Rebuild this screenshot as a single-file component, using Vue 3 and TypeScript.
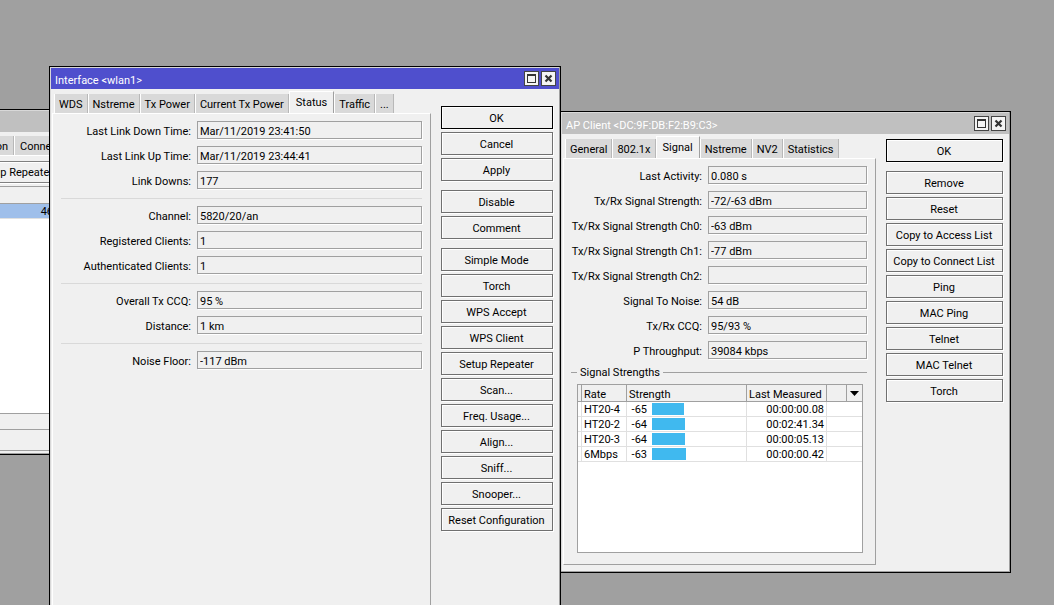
<script setup lang="ts">
import { ref } from 'vue'

interface Field {
  id: string
  label: string
  value: string
}

interface RateRow {
  rate: string
  strength: number
  measured: string
}

const backTabs = ['Registration', 'Connect List']
const interfaceTabs = ['WDS', 'Nstreme', 'Tx Power', 'Current Tx Power', 'Status', 'Traffic', '...']
const clientTabs = ['General', '802.1x', 'Signal', 'Nstreme', 'NV2', 'Statistics']

const interfaceTab = ref('Status')
const clientTab = ref('Signal')

const interfaceFields: Field[][] = [
  [
    { id: 'last-down', label: 'Last Link Down Time:', value: 'Mar/11/2019 23:41:50' },
    { id: 'last-up', label: 'Last Link Up Time:', value: 'Mar/11/2019 23:44:41' },
    { id: 'link-downs', label: 'Link Downs:', value: '177' },
  ],
  [
    { id: 'channel', label: 'Channel:', value: '5820/20/an' },
    { id: 'registered', label: 'Registered Clients:', value: '1' },
    { id: 'authenticated', label: 'Authenticated Clients:', value: '1' },
  ],
  [
    { id: 'overall-ccq', label: 'Overall Tx CCQ:', value: '95 %' },
    { id: 'distance', label: 'Distance:', value: '1 km' },
  ],
  [{ id: 'noise-floor', label: 'Noise Floor:', value: '-117 dBm' }],
]

const clientFields: Field[] = [
  { id: 'last-activity', label: 'Last Activity:', value: '0.080 s' },
  { id: 'signal', label: 'Tx/Rx Signal Strength:', value: '-72/-63 dBm' },
  { id: 'signal-ch0', label: 'Tx/Rx Signal Strength Ch0:', value: '-63 dBm' },
  { id: 'signal-ch1', label: 'Tx/Rx Signal Strength Ch1:', value: '-77 dBm' },
  { id: 'signal-ch2', label: 'Tx/Rx Signal Strength Ch2:', value: '' },
  { id: 'snr', label: 'Signal To Noise:', value: '54 dB' },
  { id: 'ccq', label: 'Tx/Rx CCQ:', value: '95/93 %' },
  { id: 'throughput', label: 'P Throughput:', value: '39084 kbps' },
]

const interfaceButtons: string[][] = [
  ['OK', 'Cancel', 'Apply'],
  ['Disable', 'Comment'],
  [
    'Simple Mode', 'Torch', 'WPS Accept', 'WPS Client', 'Setup Repeater', 'Scan...',
    'Freq. Usage...', 'Align...', 'Sniff...', 'Snooper...', 'Reset Configuration',
  ],
]

const clientButtons: string[][] = [
  ['OK'],
  [
    'Remove', 'Reset', 'Copy to Access List', 'Copy to Connect List', 'Ping',
    'MAC Ping', 'Telnet', 'MAC Telnet', 'Torch',
  ],
]

const rates: RateRow[] = [
  { rate: 'HT20-4', strength: -65, measured: '00:00:00.08' },
  { rate: 'HT20-2', strength: -64, measured: '00:02:41.34' },
  { rate: 'HT20-3', strength: -64, measured: '00:00:05.13' },
  { rate: '6Mbps', strength: -63, measured: '00:00:00.42' },
]

const barWidth = (strength: number): string => `${97 + strength}px`
</script>

<template>
  <main class="desktop">
    <section class="window window-back" aria-label="Wireless Tables">
      <header class="titlebar"></header>
      <div class="back-body">
        <div class="tabs back-tabs" role="tablist">
          <button v-for="tab in backTabs" :key="tab" type="button" role="tab" class="tab">{{ tab }}</button>
        </div>
        <div class="toolbar">
          <button type="button" class="tool">Setup Repeater</button>
        </div>
        <div class="list">
          <div class="list-head"></div>
          <div class="list-row">46</div>
        </div>
        <div class="back-status"></div>
        <div class="back-footer"></div>
      </div>
    </section>

    <section class="window window-client" aria-label="AP Client">
      <header class="titlebar">
        <h2 class="title">AP Client &lt;DC:9F:DB:F2:B9:C3&gt;</h2>
        <button type="button" class="title-button" aria-label="Maximize">
          <svg viewBox="0 0 13 13"><path d="M2 2h9v9H2zM3 4v6h7V4z" fill="#333" fill-rule="evenodd" /></svg>
        </button>
        <button type="button" class="title-button" aria-label="Close">
          <svg viewBox="0 0 13 13"><path d="M3.5 3.5l6 6M9.5 3.5l-6 6" stroke="#333" stroke-width="2.2" /></svg>
        </button>
      </header>
      <div class="window-body">
        <div class="sheet">
          <div class="tabs" role="tablist">
            <button
              v-for="tab in clientTabs" :key="tab" type="button" role="tab" class="tab"
              :class="{ active: tab === clientTab }" :aria-selected="tab === clientTab" @click="clientTab = tab"
            >{{ tab }}</button>
          </div>
          <div class="panel panel-client">
            <div class="fields">
              <div v-for="field in clientFields" :key="field.id" class="field">
                <label :for="field.id">{{ field.label }}</label>
                <input :id="field.id" type="text" readonly :value="field.value" />
              </div>
            </div>
            <fieldset class="strengths">
              <legend>Signal Strengths</legend>
              <div class="table-box">
                <table>
                  <colgroup>
                    <col class="col-mark" /><col class="col-rate" /><col class="col-strength" />
                    <col class="col-measured" /><col class="col-spare" /><col />
                  </colgroup>
                  <thead>
                    <tr>
                      <th></th>
                      <th scope="col">Rate</th>
                      <th scope="col">Strength</th>
                      <th scope="col">Last Measured</th>
                      <th></th>
                      <th class="menu-cell">
                        <button type="button" class="column-menu" aria-label="Columns">
                          <svg viewBox="0 0 9 5"><path d="M0 0h9L4.5 5z" fill="#000" /></svg>
                        </button>
                      </th>
                    </tr>
                  </thead>
                  <tbody>
                    <tr v-for="row in rates" :key="row.rate">
                      <td></td>
                      <td>{{ row.rate }}</td>
                      <td>
                        <div class="strength">
                          <span class="strength-value">{{ row.strength }}</span>
                          <span class="bar" :style="{ width: barWidth(row.strength) }"></span>
                        </div>
                      </td>
                      <td class="measured">{{ row.measured }}</td>
                      <td></td>
                      <td></td>
                    </tr>
                  </tbody>
                </table>
              </div>
            </fieldset>
          </div>
        </div>
        <div class="actions actions-client">
          <div v-for="(group, g) in clientButtons" :key="g" class="action-group">
            <button
              v-for="name in group" :key="name" type="button" class="action" :class="{ primary: name === 'OK' }"
            >{{ name }}</button>
          </div>
        </div>
      </div>
    </section>

    <section class="window window-interface" aria-label="Interface">
      <header class="titlebar focused">
        <h2 class="title">Interface &lt;wlan1&gt;</h2>
        <button type="button" class="title-button" aria-label="Maximize">
          <svg viewBox="0 0 13 13"><path d="M2 2h9v9H2zM3 4v6h7V4z" fill="#333" fill-rule="evenodd" /></svg>
        </button>
        <button type="button" class="title-button" aria-label="Close">
          <svg viewBox="0 0 13 13"><path d="M3.5 3.5l6 6M9.5 3.5l-6 6" stroke="#333" stroke-width="2.2" /></svg>
        </button>
      </header>
      <div class="window-body">
        <div class="sheet">
          <div class="tabs" role="tablist">
            <button
              v-for="tab in interfaceTabs" :key="tab" type="button" role="tab" class="tab"
              :class="{ active: tab === interfaceTab }" :aria-selected="tab === interfaceTab"
              @click="interfaceTab = tab"
            >{{ tab }}</button>
          </div>
          <div class="panel panel-interface">
            <div v-for="(group, g) in interfaceFields" :key="g" class="fields">
              <div v-for="field in group" :key="field.id" class="field">
                <label :for="field.id">{{ field.label }}</label>
                <input :id="field.id" type="text" readonly :value="field.value" />
              </div>
            </div>
          </div>
        </div>
        <div class="actions actions-interface">
          <div v-for="(group, g) in interfaceButtons" :key="g" class="action-group">
            <button
              v-for="name in group" :key="name" type="button" class="action" :class="{ primary: name === 'OK' }"
            >{{ name }}</button>
          </div>
        </div>
      </div>
    </section>
  </main>
</template>

<style>
body {
  margin: 0;
}
</style>

<style scoped>
.desktop {
  position: relative;
  min-height: 100vh;
  overflow: hidden;
  background: #a0a0a0;
  color: #000;
  font: 11px/15px Roboto, "Liberation Sans", sans-serif;
}

.desktop * {
  box-sizing: border-box;
}

button,
input {
  margin: 0;
  padding: 0;
  border: 0;
  border-radius: 0;
  background: none;
  color: inherit;
  font: inherit;
}

/* Windows are placed freely on the desktop */
.window {
  position: absolute;
  display: flex;
  flex-direction: column;
  padding: 1px;
  border: 1px solid #000;
  background: #f0f0f0;
  box-shadow: inset -1px -1px 0 #a0a0a0, inset 1px 1px 0 #d8d8d8;
}

.window-back {
  top: 109px;
  left: -300px;
  width: 400px;
  height: 346px;
}

.window-client {
  top: 111px;
  left: 560px;
  width: 451px;
  height: 462px;
}

.window-interface {
  top: 66px;
  bottom: -12px;
  left: 49px;
  width: 512px;
}

.titlebar {
  display: flex;
  flex: none;
  align-items: center;
  gap: 2px;
  height: 21px;
  padding: 0 3px 0 4px;
  background: #c0c0c0;
  color: #fff;
}

.titlebar.focused {
  background: #4f4fcd;
}

.title {
  flex: 1;
  margin: 0;
  padding-top: 3px;
  font: inherit;
}

.title-button {
  display: flex;
  width: 15px;
  height: 15px;
  border: 1px solid #444;
  background: #f4f4f4;
}

.title-button svg {
  width: 13px;
  height: 13px;
}

.window-body {
  display: flex;
  flex: 1;
  gap: 10px;
  min-height: 0;
}

.sheet {
  display: flex;
  flex: 1;
  flex-direction: column;
  min-width: 0;
  padding: 2px 0 6px 1px;
}

.tabs {
  display: flex;
  flex: none;
  align-items: flex-end;
  height: 22px;
  padding-left: 2px;
}

.tab {
  height: 19px;
  padding: 2px 4px 0;
  border-right: 1px solid #b8b8b8;
  border-left: 1px solid #fff;
  background: #d9d9d9;
  white-space: nowrap;
}

.tab.active {
  height: 22px;
  padding: 0 6px 1px;
  border-top: 1px solid #fff;
  border-right-color: #a0a0a0;
  background: #f0f0f0;
}

.panel {
  flex: 1;
  border-top: 1px solid #fff;
  border-right: 1px solid #a0a0a0;
  border-left: 1px solid #fff;
}

.panel-interface {
  padding: 7px 8px 0;
}

.panel-client {
  padding: 7px 8px 0 7px;
  border-bottom: 1px solid #a0a0a0;
}

.fields {
  display: flex;
  flex-direction: column;
  gap: 7px;
}

.fields + .fields {
  margin-top: 9px;
  padding-top: 7px;
  border-top: 1px solid #d9d9d9;
}

.field {
  display: flex;
  align-items: center;
  gap: 6px;
}

.field label {
  width: 130px;
  padding-top: 3px;
  text-align: right;
  white-space: nowrap;
}

.panel-client .field label {
  width: 131px;
}

.field input {
  flex: 1;
  min-width: 0;
  height: 18px;
  padding: 2px 2px 0;
  border: 1px solid #a0a0a0;
  box-shadow: 1px 1px 0 #fff;
}

.actions {
  display: flex;
  flex: none;
  flex-direction: column;
  gap: 9px;
}

.actions-interface {
  width: 118px;
  padding: 17px 6px 0 0;
}

.actions-client {
  width: 123px;
  padding: 5px 6px 0 0;
}

.action-group {
  display: flex;
  flex-direction: column;
  gap: 3px;
}

.action {
  height: 23px;
  padding: 2px 1px 0 0;
  border: 1px solid #707070;
  box-shadow: inset 1px 1px 0 #fff, 1px 1px 0 #fff;
  text-align: center;
  white-space: nowrap;
}

.action.primary {
  border-color: #000;
}

.strengths {
  min-width: 0;
  margin: 6px 0 0;
  padding: 0 4px 0 6px;
  border: 0;
  border-top: 1px solid #a0a0a0;
}

.strengths legend {
  padding: 0 3px;
}

.table-box {
  height: 169px;
  margin-top: 4px;
  border: 1px solid #a0a0a0;
  background: #fff;
}

table {
  width: 100%;
  border-collapse: separate;
  border-spacing: 0;
  table-layout: fixed;
}

.col-mark {
  width: 4px;
}

.col-rate {
  width: 45px;
}

.col-strength {
  width: 120px;
}

.col-measured {
  width: 80px;
}

.col-spare {
  width: 20px;
}

th,
td {
  height: 15px;
  padding: 1px 0 0 2px;
  border-right: 1px solid #e0e0e0;
  border-bottom: 1px solid #e0e0e0;
  font-weight: normal;
  line-height: 13px;
  text-align: left;
  white-space: nowrap;
}

th {
  height: 17px;
  padding-top: 3px;
  border-color: #a0a0a0;
  background: #f0f0f0;
}

th:first-child,
td:first-child {
  padding: 0;
}

th:last-child,
td:last-child,
td:nth-child(5) {
  border-right: 0;
}

.menu-cell {
  padding: 0;
}

.column-menu {
  display: flex;
  align-items: center;
  justify-content: center;
  width: 100%;
  height: 14px;
}

.column-menu svg {
  width: 9px;
  height: 5px;
}

.strength {
  display: flex;
  align-items: flex-start;
  gap: 5px;
}

.strength-value {
  width: 18px;
  text-align: right;
}

.bar {
  height: 12px;
  background: #40b9ef;
}

td.measured {
  padding-right: 2px;
  text-align: right;
}

.back-body {
  display: flex;
  flex: 1;
  flex-direction: column;
}

.back-tabs {
  justify-content: flex-end;
  height: 24px;
  padding-right: 13px;
  border-bottom: 1px solid #fff;
}

.back-tabs .tab {
  padding: 2px 5px 0;
}

.back-tabs .tab:last-child {
  width: 71px;
  text-align: left;
}

.toolbar {
  display: flex;
  flex: none;
  justify-content: flex-end;
  height: 31px;
  padding: 5px 40px 3px 0;
  border-bottom: 1px solid #a0a0a0;
}

.tool {
  width: 200px;
  padding-right: 4px;
  border: 1px solid #808080;
  box-shadow: inset 1px 1px 0 #fff, 1px 1px 0 #fff;
  text-align: right;
}

.list {
  flex: 1;
  border-bottom: 1px solid #a0a0a0;
  background: #fff;
}

.list-head {
  height: 17px;
  border-bottom: 1px solid #a0a0a0;
  background: #f0f0f0;
}

.list-row {
  height: 15px;
  padding-right: 45px;
  border-bottom: 1px solid #e0e0e0;
  background: #9fbfea;
  text-align: right;
}

.back-status {
  flex: none;
  height: 16px;
  border-bottom: 1px solid #a0a0a0;
}

.back-footer {
  flex: none;
  height: 21px;
  margin-bottom: 2px;
  border-bottom: 1px solid #a0a0a0;
}
</style>
